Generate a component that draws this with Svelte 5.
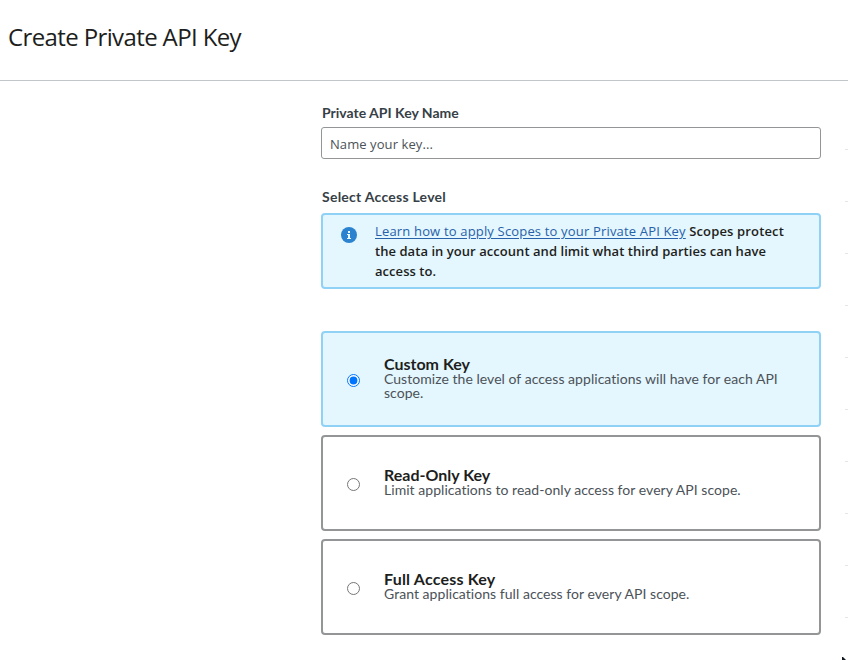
<script>
  const options = [
    { id: 'custom', title: 'Custom Key', lines: ['Customize the level of access applications will have for each API', 'scope.'] },
    { id: 'read', title: 'Read-Only Key', lines: ['Limit applications to read-only access for every API scope.'] },
    { id: 'full', title: 'Full Access Key', lines: ['Grant applications full access for every API scope.'] }
  ];
  let selected = $state('custom');
</script>

<div class="page">
  <header><h1>Create Private API Key</h1></header>
  <main>
    <form>
      <label class="label" for="key-name">Private API Key Name</label>
      <input id="key-name" class="name" type="text" placeholder="Name your key..." />
      <div class="label level">Select Access Level</div>
      <div class="notice">
        <svg width="16" height="16" viewBox="0 0 16 16" aria-hidden="true">
          <circle cx="8" cy="8" r="8" fill="#2b83d0" />
          <path d="M7 4h2v2H7zM6 7h3v4h1v1H6v-1h1V8H6z" fill="#e9f7ff" />
        </svg>
        <p>
          <span class="line"><a href="#scopes">Learn how to apply Scopes to your Private API Key</a> <b class="lead">Scopes protect</b></span>
          <b class="line">the data in your account and limit what third parties can have</b>
          <b class="line">access to.</b>
        </p>
      </div>
      <div class="options">
        {#each options as option (option.id)}
          <label class="option {option.id}" class:selected={selected === option.id}>
            <input type="radio" name="access" value={option.id} bind:group={selected} />
            <span class="copy">
              <span class="title">{option.title}</span>
              {#each option.lines as line}
                <span class="desc">{line}</span>
              {/each}
            </span>
          </label>
        {/each}
      </div>
    </form>
    <div class="ticks">
      {#each Array(10) as _}<i></i>{/each}
    </div>
  </main>
  <svg class="cursor" width="6" height="4" viewBox="0 0 6 4" aria-hidden="true">
    <path d="M0 0h1l3 3v1H0z" fill="#111820" />
  </svg>
</div>

<style>
  :global(body) { background: #fff; }
  * { box-sizing: border-box; }
  .page { position: relative; width: 848px; height: 660px; overflow: hidden; color: #1d1e20; font-family: "Lato", sans-serif; font-variant-ligatures: none; }
  header { height: 81px; padding: 19px 8px 0; border-bottom: 1px solid #c1c6c8; }
  h1 { margin: 0; font: 400 24px/36px "Open Sans", "Noto Sans", sans-serif; letter-spacing: -0.62px; white-space: nowrap; }
  main { display: flex; justify-content: space-between; padding-left: 321px; }
  form { width: 500px; padding-top: 22px; }
  .label { display: block; height: 20px; padding-left: 1px; font: 700 14px/20px "Lato", sans-serif; color: #373f47; }
  .name { display: block; width: 500px; height: 32px; margin: 4px 0 28px; padding: 1px 8px 0; border: 1px solid #949596; border-radius: 3px; font: 400 13px "Open Sans", sans-serif; letter-spacing: 0.08px; outline: none; }
  .name::placeholder { color: #4b5258; opacity: 1; }
  .level { margin-bottom: 6px; letter-spacing: 0.25px; }
  .notice { display: flex; gap: 18px; height: 76px; padding: 6px 18px; background: #e4f6fe; border: 2px solid #90d2f6; border-radius: 4px; }
  .notice svg { flex: none; margin-top: 6px; }
  p { margin: 0; font: 400 13px/20px "Open Sans", "Noto Sans", sans-serif; }
  .line { display: block; white-space: nowrap; }
  b { font-weight: 600; letter-spacing: 0.05px; }
  .lead { letter-spacing: 0.15px; }
  a { color: #2761a9; letter-spacing: 0.17px; text-decoration: underline; text-underline-offset: 2px; }
  .options { display: flex; flex-direction: column; gap: 8px; margin-top: 42px; }
  .option { display: flex; align-items: center; gap: 24px; height: 96px; padding: 0 24px; border: 2px solid #949596; border-radius: 4px; }
  .option.selected { background: #e4f6fe; border-color: #90d2f6; }
  .option input { flex: none; width: 13px; height: 13px; margin: 2px 0 0; }
  .copy { display: flex; flex-direction: column; padding-bottom: 2px; white-space: nowrap; }
  .title { font-size: 16px; line-height: 16px; font-weight: 700; }
  .full .title { letter-spacing: 0.2px; }
  .desc { font-size: 14px; line-height: 14px; letter-spacing: 0.04px; color: #4b5258; }
  .ticks { display: flex; flex-direction: column; gap: 51px; padding-top: 68px; }
  .ticks i { width: 3px; height: 1px; background: #e4e5e6; }
  .cursor { position: absolute; left: 842px; top: 657px; }
</style>
